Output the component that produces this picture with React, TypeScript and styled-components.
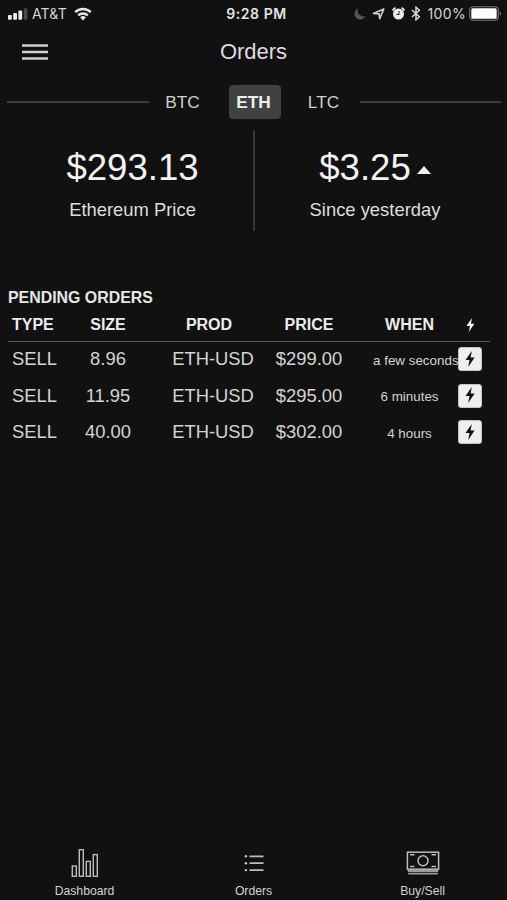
import React from "react";
import styled, { createGlobalStyle } from "styled-components";

const GlobalStyle = createGlobalStyle`
  * { box-sizing: border-box; }
  body {
    margin: 0;
    background: #111111;
    color: #dedede;
    font-family: "Liberation Sans", Arial, sans-serif;
  }
`;

const Screen = styled.div`
  display: flex;
  flex-direction: column;
  width: 507px;
  height: 900px;
  overflow: hidden;
  background: #111111;
`;

const StatusBar = styled.header`
  display: grid;
  grid-template-columns: 1fr auto 1fr;
  align-items: center;
  height: 27px;
  padding: 0 5px 0 8px;
  font-family: Inter, sans-serif;
  font-size: 14px;
  color: #d6d6d6;
  line-height: 27px;
`;

const Carrier = styled.div`
  display: flex;
  align-items: center;
`;

const CarrierName = styled.span`
  margin: 0 7px 0 4px;
  width: 35px;
  white-space: nowrap;
  font-size: 14px;
  letter-spacing: 0.15px;
`;

const Clock = styled.div`
  font-weight: 600;
  font-size: 14px;
  letter-spacing: 0.55px;
  padding-left: 3px;
  color: #e4e4e4;
`;

const Indicators = styled.div`
  display: flex;
  align-items: center;
  justify-content: flex-end;
`;

const BatteryLevel = styled.span`
  margin: 0 3px 0 6px;
  font-size: 14px;
  letter-spacing: 0.35px;
`;

const Icon = styled.svg<{ $gap?: number }>`
  display: block;
  flex: none;
  margin-left: ${(p) => p.$gap ?? 0}px;
`;

const TitleBar = styled.div`
  display: grid;
  grid-template-columns: 100px 1fr 100px;
  align-items: center;
  height: 50px;
`;

const MenuButton = styled.button`
  display: flex;
  padding: 0;
  margin-left: 22px;
  width: 26px;
  border: 0;
  background: none;
`;

const Title = styled.h1`
  margin: 0;
  text-align: center;
  font-size: 22px;
  font-weight: 400;
  line-height: 50px;
`;

const CurrencyTabs = styled.nav`
  display: flex;
  align-items: center;
  height: 34px;
  margin: 8px 6px 0 7px;
`;

const Rule = styled.span`
  flex: 1;
  height: 2px;
  background: #3c3c3c;
`;

const CurrencyTab = styled.button<{ $active?: boolean }>`
  width: ${(p) => (p.$active ? 52 : 70)}px;
  height: 34px;
  margin: ${(p) => (p.$active ? "0 9px 0 10px" : "0")};
  padding: 0 2px 0 0;
  border: 0;
  border-radius: 4px;
  background: ${(p) => (p.$active ? "#414141" : "transparent")};
  color: ${(p) => (p.$active ? "#efefef" : "#cfcfcf")};
  font: ${(p) => (p.$active ? 700 : 400)} 17.3px/34px "Liberation Sans", Arial, sans-serif;
`;

const Summary = styled.section`
  display: grid;
  grid-template-columns: 241px 2px 240px;
  height: 101px;
  margin: 11px 0 0 12px;
`;

const Divider = styled.span`
  background: #363636;
`;

const Stat = styled.div`
  display: flex;
  flex-direction: column;
  align-items: center;
  padding-top: 17px;
`;

const StatValue = styled.div`
  display: flex;
  align-items: center;
  gap: 6px;
  height: 42px;
  font-size: 36.6px;
  line-height: 42px;
  color: #f2f2f2;
`;

const Trend = styled.span`
  padding-top: 3px;
`;

const StatLabel = styled.div`
  margin-top: 10px;
  font-size: 18.4px;
  line-height: 22px;
`;

const Orders = styled.section`
  flex: 1;
  padding: 57px 17px 0 8px;
`;

const Heading = styled.h2`
  margin: 0;
  font-size: 15.9px;
  font-weight: 700;
  line-height: 20px;
  color: #e6e6e6;
`;

const Row = styled.div<{ $head?: boolean }>`
  display: grid;
  grid-template-columns: 52px 96px 106px 111px 73px 48px;
  align-items: center;
  width: 486px;
  height: ${(p) => (p.$head ? 33 : 36.6)}px;
  padding-top: ${(p) => (p.$head ? 1 : 0)}px;
  font-size: ${(p) => (p.$head ? 16 : 18.4)}px;
  font-weight: ${(p) => (p.$head ? 700 : 400)};
  line-height: 22px;
  color: ${(p) => (p.$head ? "#ececec" : "#d4d4d4")};
`;

const TableRule = styled.div`
  height: 1px;
  margin-bottom: -1px;
  background: #555555;
`;

const Cell = styled.div<{ $align?: "left"; $shift?: number; $trail?: number }>`
  text-align: ${(p) => p.$align ?? "center"};
  padding-left: ${(p) => p.$shift ?? 0}px;
  padding-right: ${(p) => p.$trail ?? 0}px;
  white-space: nowrap;
`;

const WhenCell = styled(Cell)`
  padding-top: 3px;
  font-size: 13.4px;
`;

const IconCell = styled.div`
  display: flex;
  justify-content: center;
`;

const FlashButton = styled.button`
  display: flex;
  align-items: center;
  justify-content: center;
  width: 24px;
  height: 24px;
  padding: 0 0 1px;
  border: 1px solid #c4c4c4;
  border-radius: 3px;
  background: #efefef;
`;

const TabBar = styled.nav`
  display: grid;
  grid-template-columns: repeat(3, 1fr);
  height: 54px;
`;

const Tab = styled.button`
  display: flex;
  flex-direction: column;
  align-items: center;
  padding: 0;
  border: 0;
  background: none;
  color: #d2d2d2;
  font: 400 12.2px/16px "Liberation Sans", Arial, sans-serif;
`;

const TabIcon = styled.span`
  display: flex;
  height: 37px;
`;

const Flash = ({ color, size = 16 }: { color: string; size?: number }) => (
  <Icon width={size * 0.625} height={size} viewBox="0 0 10 16">
    <path d="M6.8 0 .5 9h4L3.2 16 9.6 6.6H5.6Z" fill={color} />
  </Icon>
);

const orders = [
  { size: "8.96", price: "$299.00", when: "a few seconds" },
  { size: "11.95", price: "$295.00", when: "6 minutes" },
  { size: "40.00", price: "$302.00", when: "4 hours" },
];

export default function App() {
  return (
    <>
      <GlobalStyle />
      <Screen>
        <StatusBar>
          <Carrier>
            <Icon width="20" height="12" viewBox="0 0 20 12">
              <g fill="#ececec">
                <rect x="0" y="7" width="3.8" height="4.8" rx="1" />
                <rect x="5.2" y="5" width="3.8" height="6.8" rx="1" />
                <rect x="10.4" y="2.6" width="3.8" height="9.2" rx="1" />
              </g>
              <rect x="15.8" y="0.3" width="3.6" height="11.5" rx="1" fill="#494949" />
            </Icon>
            <CarrierName>AT&amp;T</CarrierName>
            <Icon width="18" height="14" viewBox="0 0 18 14">
              <g fill="none" stroke="#e8e8e8" strokeWidth="2.5">
                <path d="M1.2 5.1a11.2 11.2 0 0 1 15.6 0" />
                <path d="M4.2 8.3a7 7 0 0 1 9.6 0" />
              </g>
              <path d="M6.2 10.4a4.1 4.1 0 0 1 5.6 0L9 13.4Z" fill="#e8e8e8" />
            </Icon>
          </Carrier>
          <Clock>9:28 PM</Clock>
          <Indicators>
            <Icon width="12" height="12" viewBox="0 0 12 12">
              <path d="M4 0.5A5.7 5.7 0 1 0 11.4 8 5.8 5.8 0 0 1 4 .5Z" fill="#555" />
            </Icon>
            <Icon $gap={6} width="13" height="12" viewBox="0 0 13 12">
              <path d="M11.8 1 7.7 10.6 7.1 5.9 1.4 5.5Z" fill="none" stroke="#d0d0d0" strokeWidth="1.6" strokeLinejoin="round" />
            </Icon>
            <Icon $gap={7} width="13" height="13" viewBox="0 0 13 13">
              <circle cx="6.5" cy="7" r="5.5" fill="#ededed" />
              <path d="M1.1 2.9 2.8 1.2M11.9 2.9 10.2 1.2" stroke="#ededed" strokeWidth="1.9" strokeLinecap="round" />
              <path d="M7 4v3.5H4.4" fill="none" stroke="#333" strokeWidth="1.1" />
            </Icon>
            <Icon $gap={6} width="10" height="15" viewBox="0 0 10 15">
              <path d="m1 4 7.4 6.7L5 13.8V1.2l3.4 3.1L1 11" fill="none" stroke="#d8d8d8" strokeWidth="1.5" />
            </Icon>
            <BatteryLevel>100%</BatteryLevel>
            <Icon width="33" height="15" viewBox="0 0 33 15">
              <rect x=".7" y=".7" width="28.6" height="13.6" rx="3.5" fill="none" stroke="#777" strokeWidth="1.1" />
              <rect x="2.3" y="2.3" width="25.4" height="10.4" rx="1.5" fill="#fff" />
              <path d="M30.6 5.2a2.6 2.6 0 0 1 0 4.6Z" fill="#777" />
            </Icon>
          </Indicators>
        </StatusBar>

        <TitleBar>
          <MenuButton aria-label="Menu">
            <Icon width="26" height="18" viewBox="0 0 26 18">
              <path d="M0 2.5h26M0 9h26M0 15.5h26" stroke="#d0d0d0" strokeWidth="2.5" />
            </Icon>
          </MenuButton>
          <Title>Orders</Title>
        </TitleBar>

        <CurrencyTabs>
          <Rule />
          <CurrencyTab>BTC</CurrencyTab>
          <CurrencyTab $active>ETH</CurrencyTab>
          <CurrencyTab>LTC</CurrencyTab>
          <Rule />
        </CurrencyTabs>

        <Summary>
          <Stat>
            <StatValue>$293.13</StatValue>
            <StatLabel>Ethereum Price</StatLabel>
          </Stat>
          <Divider />
          <Stat>
            <StatValue>
              $3.25
              <Trend>
                <Icon width="14" height="8" viewBox="0 0 14 8">
                  <path d="M7 0 14 8H0Z" fill="#f2f2f2" />
                </Icon>
              </Trend>
            </StatValue>
            <StatLabel>Since yesterday</StatLabel>
          </Stat>
        </Summary>

        <Orders>
          <Heading>PENDING ORDERS</Heading>
          <Row $head>
            <Cell $align="left" $shift={4}>TYPE</Cell>
            <Cell>SIZE</Cell>
            <Cell>PROD</Cell>
            <Cell $trail={17}>PRICE</Cell>
            <Cell>WHEN</Cell>
            <IconCell>
              <Flash color="#f4f4f4" size={14} />
            </IconCell>
          </Row>
          <TableRule />
          {orders.map((o) => (
            <Row key={o.size}>
              <Cell $align="left" $shift={4}>SELL</Cell>
              <Cell>{o.size}</Cell>
              <Cell $shift={8}>ETH-USD</Cell>
              <Cell $trail={17}>{o.price}</Cell>
              <WhenCell>{o.when}</WhenCell>
              <IconCell>
                <FlashButton aria-label="Fill order">
                  <Flash color="#111" />
                </FlashButton>
              </IconCell>
            </Row>
          ))}
        </Orders>

        <TabBar>
          <Tab>
            <TabIcon>
              <Icon width="28" height="32" viewBox="0 0 28 32">
                <g fill="none" stroke="#bcbcbc" strokeWidth="1.4">
                  <rect x="1.3" y="20" width="4" height="10.3" />
                  <rect x="8.3" y="3.7" width="4" height="26.6" />
                  <rect x="15.3" y="15.4" width="4" height="14.9" />
                  <rect x="22.3" y="8.6" width="4" height="21.7" />
                </g>
              </Icon>
            </TabIcon>
            Dashboard
          </Tab>
          <Tab>
            <TabIcon>
              <Icon width="20" height="32" viewBox="0 0 20 32">
                <path d="M5.5 10.3h14M5.5 17.2h14M5.5 24.1h14" stroke="#bcbcbc" strokeWidth="1.7" />
                <g fill="#cccccc">
                  <circle cx="1.9" cy="10.3" r="1.2" />
                  <circle cx="1.9" cy="17.2" r="1.2" />
                  <circle cx="1.9" cy="24.1" r="1.2" />
                </g>
              </Icon>
            </TabIcon>
            Orders
          </Tab>
          <Tab>
            <TabIcon>
              <Icon width="34" height="32" viewBox="0 0 34 32">
                <g fill="none" stroke="#bcbcbc" strokeWidth="1.5">
                  <rect x="1.4" y="6.2" width="31.2" height="17" />
                  <circle cx="17" cy="14.7" r="5" />
                  <path d="M4 8.8h4.5M25.5 8.8H30M4 20.6h4.5M25.5 20.6H30" />
                </g>
                <path d="M1.8 24h30.4v2H1.8ZM2.2 26.8h29.6v1.7H2.2Z" fill="#9b9b9b" />
              </Icon>
            </TabIcon>
            Buy/Sell
          </Tab>
        </TabBar>
      </Screen>
    </>
  );
}
